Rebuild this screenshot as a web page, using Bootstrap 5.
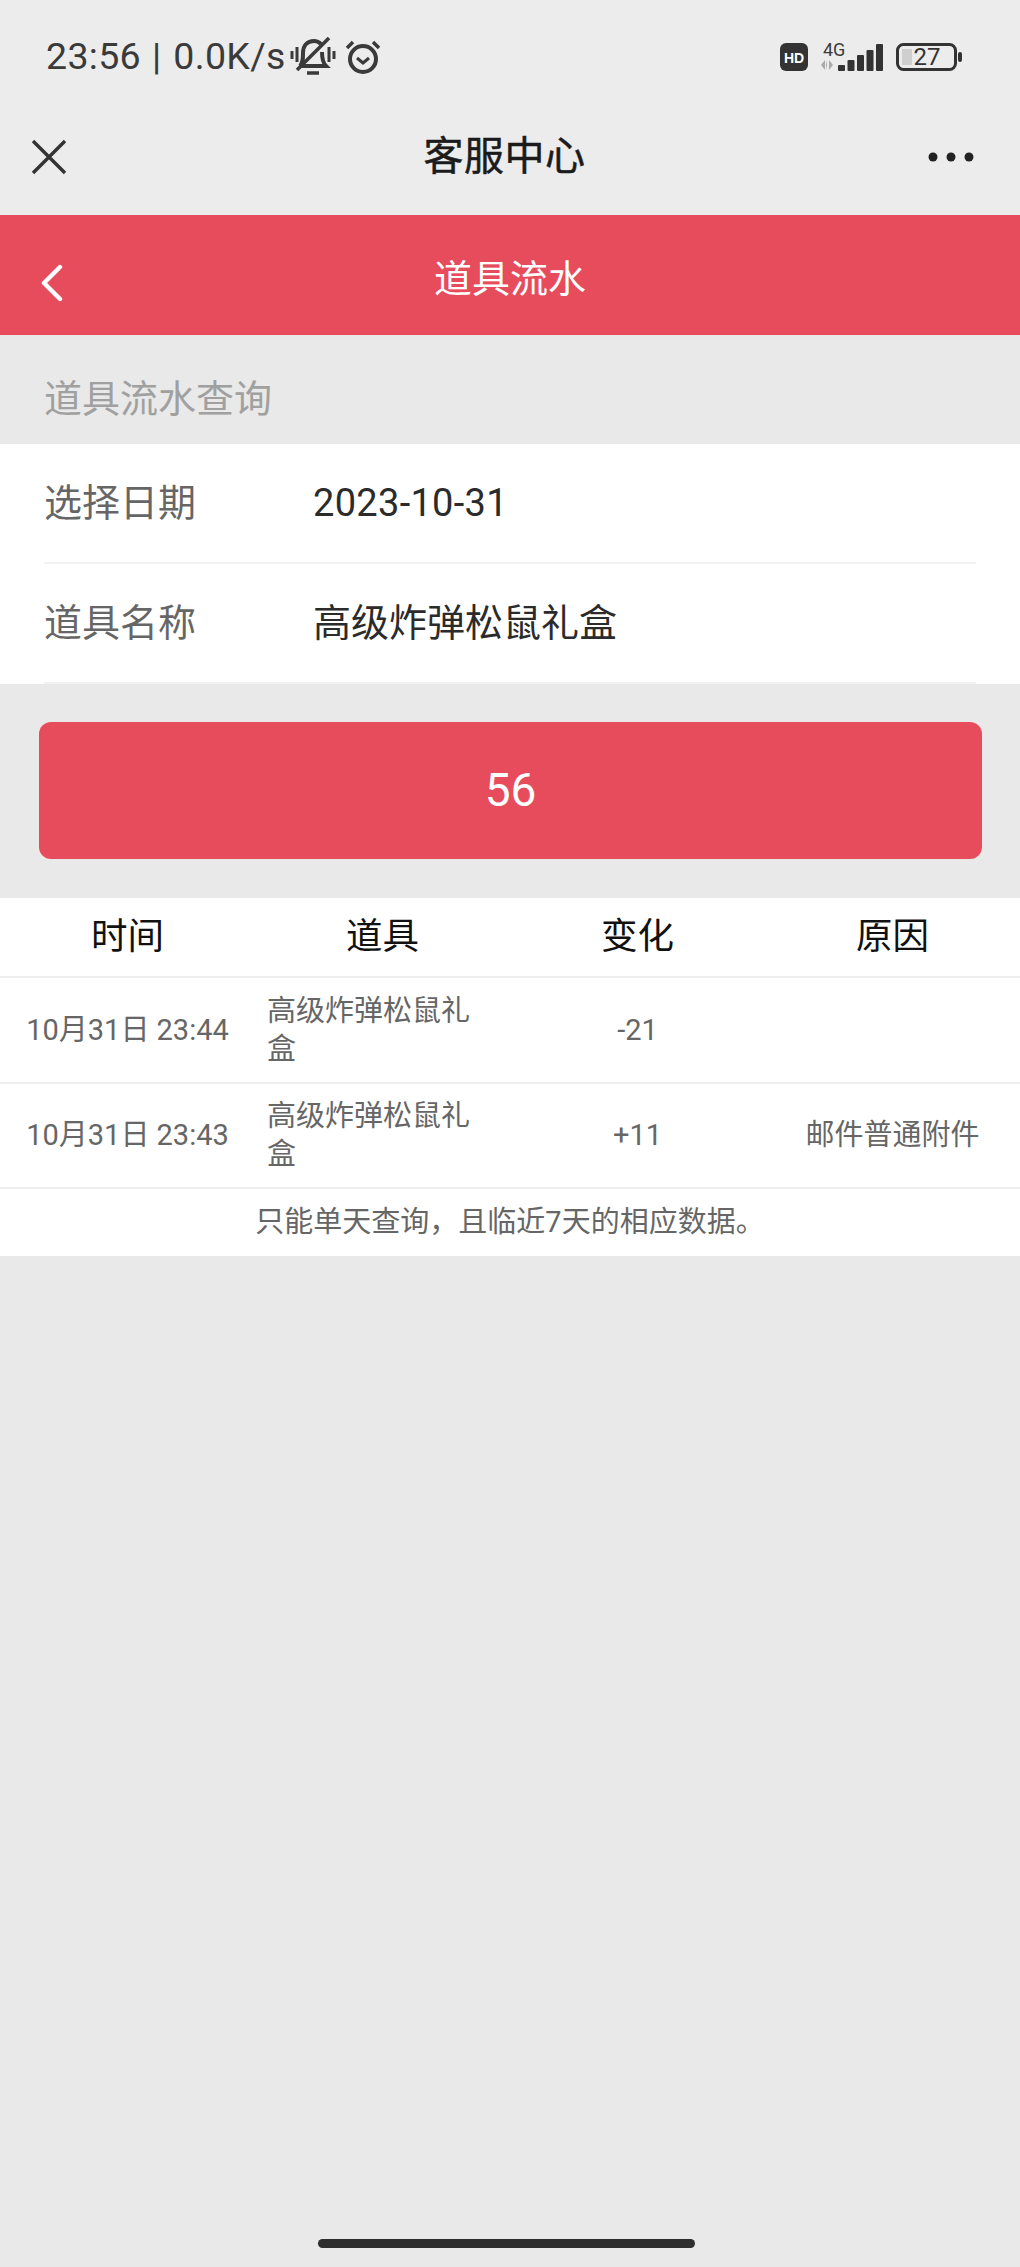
<!DOCTYPE html>
<html lang="zh-CN">
<head>
  <meta charset="UTF-8">
  <meta name="viewport" content="width=device-width, initial-scale=1.0">
  <title>客服中心 - 道具流水</title>
  <link rel="stylesheet" href="https://cdn.jsdelivr.net/npm/bootstrap@5.3.2/dist/css/bootstrap.min.css">
  <style>
    html, body { height: 100%; margin: 0; }
    body {
      background: #e9e9e9;
      color: #333;
      font-family: Roboto, "Noto Sans CJK SC", sans-serif;
    }
    .page { height: 2267px; }
    .top-area { background: #ececec; }
    .status-bar { height: 105px; padding: 9px 58px 0 46px; color: #3a3a3a; }
    .status-text { font-size: 37.5px; line-height: 1; white-space: nowrap; letter-spacing: .3px; }
    .status-sep { margin: 0 12px 0 11px; }
    .title-bar { height: 110px; padding: 0 46px 6px 31px; }
    .title-bar h1 { font-size: 40px; font-weight: 400; -webkit-text-stroke: .5px #1b1b1b; color: #1b1b1b; margin: 0 0 0 14px; letter-spacing: .5px; }
    .red-bar { height: 120px; background: #e74c5d; color: #fff; padding: 10px 0 0 41px; }
    .back-arrow { margin-top: 5px; }
    .red-bar h2 { font-size: 38px; font-weight: 400; margin: 0; left: 0; right: 0; text-align: center; }
    .section-label { height: 109px; padding: 20px 0 0 44px; font-size: 38px; color: #a0a0a0; }
    .form-block { background: #fff; height: 240px; padding-left: 44px; padding-right: 44px; }
    .form-line { height: 120px; font-size: 38px; border-bottom: 2px solid #f2f2f2; }
    .form-line span:first-child { width: 269px; color: #666; }
    .form-line span:last-child { color: #2b2b2b; }
    .date-value { letter-spacing: .3px; }
    .query-btn {
      display: block; width: 943px; height: 137px; margin: 38px 0 39px 39px;
      background: #e74c5d; color: #fff; border: 0; border-radius: 12px; font-size: 46px;
    }
    .flow-table { background: #fff; table-layout: fixed; width: 100%; margin: 0; border-collapse: collapse; }
    .flow-table th { height: 79px; font-size: 36.5px; font-weight: 400; color: #111; text-align: center; vertical-align: middle; padding: 0; border-bottom: 2px solid #eee; }
    .flow-table td { height: 105.5px; font-size: 29px; line-height: 38px; color: #666; text-align: center; vertical-align: middle; padding: 0; border-bottom: 2px solid #eee; }
    .flow-table td.item-name { text-align: left; padding: 0 14px 0 12px; }
    .tip-line { background: #fff; height: 67px; font-size: 29px; color: #666; }
    .home-bar { width: 377px; height: 9px; border-radius: 5px; background: #2e2e2e; margin: auto 0 19px 318px; }
  </style>
</head>
<body>

<div class="page d-flex flex-column">
  <div class="top-area">
    <div class="status-bar d-flex justify-content-between align-items-center">
      <div class="d-flex align-items-center">
        <span class="status-text">23:56<span class="status-sep">|</span>0.0K/s</span>
        <svg class="ms-1" width="46" height="42" viewBox="0 0 46 42" fill="none" stroke="#3a3a3a" stroke-width="4">
          <path d="M2 15v8M7 11v15M39 11v15M44 15v8" stroke-width="3"/>
          <path d="M10 30c3-3 3-7 3-13 0-7 4-12 11-12 3 0 5 1 7 3M32 16c0 7 1 11 4 14H10"/>
          <path d="M17 37h12" stroke-width="3.5"/>
          <path d="M7 34L39 2" stroke-width="3.5"/>
        </svg>
        <svg class="ms-2" width="38" height="36" viewBox="0 0 38 36" fill="none" stroke="#3a3a3a">
          <circle cx="19" cy="20" r="13" stroke-width="4"/>
          <path d="M13 19l6 5 6-5" stroke-width="3"/>
          <path d="M3 9l6-6M35 9l-6-6" stroke-width="3.5"/>
        </svg>
      </div>
      <div class="d-flex align-items-center">
        <svg width="28" height="28" viewBox="0 0 28 28">
          <rect width="28" height="28" rx="6" fill="#333"/>
          <text x="14" y="19.5" text-anchor="middle" font-family="Liberation Sans" font-weight="700" font-size="14" fill="#fff">HD</text>
        </svg>
        <svg class="ms-2" width="72" height="44" viewBox="0 -6 72 44">
          <text x="7" y="15" font-family="Roboto" font-size="18" fill="#3a3a3a">4G</text>
          <path d="M5 24l4-5v10zM11 24l-1 5V19zM13 19l4 5-4 5z" fill="#aaa"/>
          <rect x="22" y="24" width="7" height="6" rx="1" fill="#333"/>
          <rect x="31.5" y="19" width="7" height="11" rx="1" fill="#333"/>
          <rect x="41" y="14" width="7" height="16" rx="1" fill="#333"/>
          <rect x="50.5" y="9" width="7" height="21" rx="1" fill="#333"/>
          <rect x="60" y="3" width="7" height="27" rx="1" fill="#333"/>
        </svg>
        <svg class="ms-2" width="66" height="28" viewBox="0 0 66 28">
          <rect x="1.5" y="1.5" width="58" height="25" rx="6" fill="none" stroke="#333" stroke-width="3"/>
          <rect x="6" y="6" width="10" height="16" fill="#cfcfcf"/>
          <rect x="62" y="9" width="4" height="10" rx="2" fill="#333"/>
          <text x="31" y="22" text-anchor="middle" font-family="Roboto" font-size="24" fill="#333">27</text>
        </svg>
      </div>
    </div>

    <div class="title-bar d-flex justify-content-between align-items-center">
      <svg width="36" height="36" viewBox="0 0 36 36" stroke="#333" stroke-width="3.4">
        <path d="M2 2l32 32M34 2L2 34"/>
      </svg>
      <h1>客服中心</h1>
      <svg width="46" height="10" viewBox="0 0 46 10" fill="#222">
        <circle cx="5" cy="5" r="4.5"/><circle cx="23" cy="5" r="4.5"/><circle cx="41" cy="5" r="4.5"/>
      </svg>
    </div>
  </div>

  <div class="red-bar d-flex align-items-center position-relative">
    <svg class="back-arrow" width="22" height="38" viewBox="0 0 22 38" fill="none" stroke="#fff" stroke-width="4.4" stroke-linecap="round" stroke-linejoin="round">
      <path d="M19 3L3 19l16 16"/>
    </svg>
    <h2 class="position-absolute">道具流水</h2>
  </div>

  <div class="section-label d-flex align-items-center">道具流水查询</div>

  <div class="form-block">
    <div class="form-line d-flex align-items-center"><span>选择日期</span><span class="date-value">2023-10-31</span></div>
    <div class="form-line d-flex align-items-center"><span>道具名称</span><span>高级炸弹松鼠礼盒</span></div>
  </div>

  <button type="button" class="btn query-btn">56</button>

  <table class="table flow-table">
    <thead>
      <tr><th>时间</th><th>道具</th><th>变化</th><th>原因</th></tr>
    </thead>
    <tbody>
      <tr><td>10月31日 23:44</td><td class="item-name">高级炸弹松鼠礼盒</td><td>-21</td><td></td></tr>
      <tr><td>10月31日 23:43</td><td class="item-name">高级炸弹松鼠礼盒</td><td>+11</td><td>邮件普通附件</td></tr>
    </tbody>
  </table>
  <div class="tip-line d-flex align-items-center justify-content-center">只能单天查询，且临近7天的相应数据。</div>

  <div class="home-bar"></div>
</div>

<script src="https://cdn.jsdelivr.net/npm/bootstrap@5.3.2/dist/js/bootstrap.bundle.min.js"></script>
</body>
</html>
